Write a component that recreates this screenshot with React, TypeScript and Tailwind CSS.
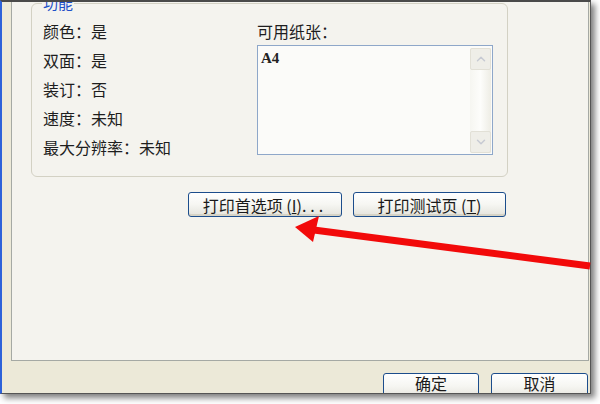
import { ChevronUp, ChevronDown } from "lucide-react";

const cjk = "font-['Noto_Sans_CJK_SC','Noto_Sans',sans-serif]";

function XpButton({ children, className }: { children: React.ReactNode; className: string }) {
    return (
        <div
            className={`flex justify-center rounded-[3px] border border-[#1c4d8c] bg-gradient-to-b from-white via-[#f6f6f2] to-[#e4e3dc] text-[16px] text-[#1a1a1a] shadow-[inset_0_-2px_0_#d6d3c6] ${className}`}
        >
            {children}
        </div>
    );
}

const specs = ["颜色：是", "双面：是", "装订：否", "速度：未知", "最大分辨率：未知"];

export default function App() {
    return (
        <div className={`relative h-[404px] w-[600px] overflow-hidden bg-white ${cjk}`}>
            {/* dialog window */}
            <div className="flex h-[394px] w-[591px] flex-col overflow-hidden border-t-2 border-l-2 border-r border-b border-t-[#4a4a4a] border-l-[#2d62d9] border-r-[#555] border-b-[#555] bg-[#ece9d8] pl-[9px] pr-[1px] shadow-[4px_4px_6px_rgba(0,0,0,0.5)]">
                {/* tab page */}
                <div className="h-[359px] shrink-0 border-x border-b border-[#a5a9a4] bg-[#f4f3ee] pl-[19px]">
                    {/* group box */}
                    <div className="relative mt-[1px] flex h-[174px] w-[477px] rounded-[6px] border border-[#d3d1c4]">
                        <span className="absolute -top-[9px] left-[10px] bg-[#f4f3ee] px-[1px] text-[15px] leading-[16px] text-[#1f50c8]">
                            功能
                        </span>
                        <div className="w-[225px] pl-[11px] pt-[13px] text-[16px] leading-[29px] text-[#1e1e1e]">
                            {specs.map((s) => (
                                <div key={s}>{s}</div>
                            ))}
                        </div>
                        <div className="pt-[15px]">
                            <div className="text-[16px] leading-[24px] text-[#1e1e1e]">可用纸张：</div>
                            <div className="mt-[2px] flex h-[110px] w-[236px] border border-[#8ea7c9] bg-[#fbfbf9]">
                                <div className="flex-1 pl-[3px] pt-[4px] font-['Liberation_Serif',serif] text-[15px] font-bold leading-[16px] text-[#222]">
                                    A4
                                </div>
                                <div className="mr-[1px] mt-[2px] mb-[1px] flex w-[21px] flex-col justify-between bg-gradient-to-r from-[#f6f6f1] via-[#fdfdfb] to-[#eeede5]">
                                    <div className="flex h-[22px] items-center justify-center rounded-[2px] border border-[#e2e0d6] bg-[#efeee8]">
                                        <ChevronUp size={14} strokeWidth={2.5} className="text-[#c7cad3]" />
                                    </div>
                                    <div className="flex h-[22px] items-center justify-center rounded-[2px] border border-[#e2e0d6] bg-[#efeee8]">
                                        <ChevronDown size={14} strokeWidth={2.5} className="text-[#c7cad3]" />
                                    </div>
                                </div>
                            </div>
                        </div>
                    </div>
                    {/* action buttons */}
                    <div className="mt-[15px] flex gap-[11px] pl-[157px]">
                        <XpButton className="h-[25px] w-[154px] items-center">
                            <span>
                                打印首选项 (<u>I</u>)<span className="tracking-[4px]">...</span>
                            </span>
                        </XpButton>
                        <XpButton className="h-[25px] w-[153px] items-center">
                            <span>
                                打印测试页 (<u>T</u>)
                            </span>
                        </XpButton>
                    </div>
                </div>
                {/* OK / Cancel */}
                <div className="flex gap-[12px] pl-[372px] pt-[12px]">
                    <XpButton className="h-[26px] w-[96px] shrink-0 items-start leading-[18px]">确定</XpButton>
                    <XpButton className="h-[26px] w-[97px] shrink-0 items-start leading-[18px]">取消</XpButton>
                </div>
            </div>

            {/* red annotation arrow */}
            <svg className="pointer-events-none absolute left-0 top-0" width="600" height="404">
                <line x1="590" y1="266" x2="310" y2="229.5" stroke="#f20a0a" strokeWidth="7" />
                <polygon points="295,227 319,216 313,242" fill="#f20a0a" />
            </svg>
        </div>
    );
}
